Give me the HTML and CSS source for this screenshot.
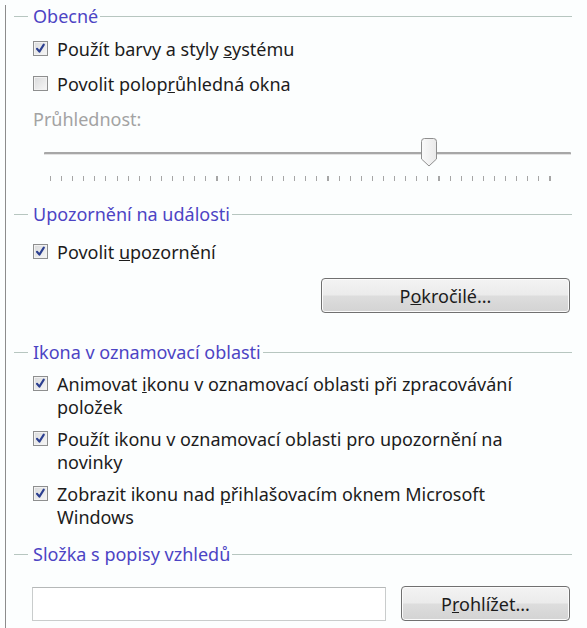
FILE: index.html
```html
<!DOCTYPE html>
<html lang="cs">
<head>
<meta charset="utf-8">
<link rel="stylesheet" href="styles.css">
</head>
<body>
<div class="panel">
  <div class="legend first"><span>Obecné</span></div>
  <div class="check r1"><span class="box on"><svg viewBox="0 0 13 13" width="13" height="13"><path d="M3 6.8 L5.4 9.6 L9.8 2.6" fill="none" stroke="#2b3f90" stroke-width="2.1" stroke-linecap="round" stroke-linejoin="round"/></svg></span><span class="label">Použít barvy a styly <u>s</u>ystému</span></div>
  <div class="check r2"><span class="box"></span><span class="label">Povolit polop<u>r</u>ůhledná okna</span></div>
  <div class="dim">Průhlednost:</div>
  <div class="slider">
    <div class="track"></div>
    <svg class="thumb" width="18" height="29" viewBox="0 0 18 29"><defs><linearGradient id="tg" x1="0" x2="1"><stop offset="0" stop-color="#fafafa"/><stop offset="1" stop-color="#e9e9e9"/></linearGradient></defs><path d="M1.5 3.5 Q1.5 0.5 4.5 0.5 H13.5 Q16.5 0.5 16.5 3.5 V21 L9 28 L1.5 21 Z" fill="url(#tg)" stroke="#8f8f8f"/></svg>
  </div>
  <div class="ticks"></div>

  <div class="legend l2"><span>Upozornění na události</span></div>
  <div class="check r3"><span class="box on"><svg viewBox="0 0 13 13" width="13" height="13"><path d="M3 6.8 L5.4 9.6 L9.8 2.6" fill="none" stroke="#2b3f90" stroke-width="2.1" stroke-linecap="round" stroke-linejoin="round"/></svg></span><span class="label">Povolit <u>u</u>pozornění</span></div>
  <div class="btn-row"><button class="btn wide">P<u>o</u>kročilé...</button></div>

  <div class="legend l3"><span>Ikona v oznamovací oblasti</span></div>
  <div class="check multi r4"><span class="box on"><svg viewBox="0 0 13 13" width="13" height="13"><path d="M3 6.8 L5.4 9.6 L9.8 2.6" fill="none" stroke="#2b3f90" stroke-width="2.1" stroke-linecap="round" stroke-linejoin="round"/></svg></span><span class="label">Animovat <u>i</u>konu v oznamovací oblasti při zpracovávání položek</span></div>
  <div class="check multi r5"><span class="box on"><svg viewBox="0 0 13 13" width="13" height="13"><path d="M3 6.8 L5.4 9.6 L9.8 2.6" fill="none" stroke="#2b3f90" stroke-width="2.1" stroke-linecap="round" stroke-linejoin="round"/></svg></span><span class="label">Použít ikonu v oznamovací oblasti pro upozornění na novinky</span></div>
  <div class="check multi r5"><span class="box on"><svg viewBox="0 0 13 13" width="13" height="13"><path d="M3 6.8 L5.4 9.6 L9.8 2.6" fill="none" stroke="#2b3f90" stroke-width="2.1" stroke-linecap="round" stroke-linejoin="round"/></svg></span><span class="label">Zobrazit ikonu nad <u>p</u>řihlašovacím oknem Microsoft Windows</span></div>

  <div class="legend l4"><span>Složka s popisy vzhledů</span></div>
  <div class="path-row">
    <div class="input"></div>
    <button class="btn">P<u>r</u>ohlížet...</button>
  </div>
</div>
</body>
</html>
```

FILE: styles.css
```css
html, body {
  margin: 0;
  padding: 0;
  background: #fcfefe;
}
body {
  width: 587px;
  height: 628px;
  overflow: hidden;
  font-family: "Noto Sans", "Open Sans", sans-serif;
  font-size: 18px;
  color: #1c1c1c;
}
.panel {
  margin-left: 5px;
  height: 628px;
  border-left: 1px solid #8c8c8c;
  padding-right: 15px;
  box-sizing: border-box;
}
.legend {
  display: flex;
  align-items: center;
  height: 22px;
  line-height: 22px;
  color: #4c44c4;
}
.legend.first { margin-top: 5px; }
.legend.l2 { margin-top: 22px; }
.legend.l3 { margin-top: 28px; }
.legend.l4 { margin-top: 15px; }
.legend::before {
  content: "";
  width: 14px;
  height: 1px;
  margin-left: 8px;
  margin-right: 5px;
  background: #b7c6c0;
}
.legend::after {
  content: "";
  flex: 1;
  height: 1px;
  margin-left: 2px;
  background: #b7c6c0;
}
.check {
  display: flex;
  align-items: flex-start;
  padding-left: 27px;
  padding-right: 27px;
  line-height: 22px;
}
.check.multi { line-height: 22.5px; }
.r1 { margin-top: 11px; }
.r2 { margin-top: 13px; }
.r3 { margin-top: 16px; }
.r4 { margin-top: 10px; }
.r5 { margin-top: 10px; }
.box {
  flex: none;
  display: block;
  width: 13px;
  height: 13px;
  margin-top: 3px;
  margin-right: 9px;
  border: 1px solid #8e8f8f;
  background: linear-gradient(135deg, #d9dadb, #f7f7f7);
  box-shadow: inset 0 0 0 1px #f2f2f2;
}
.box svg { display: block; }
.dim {
  color: #a3a3a3;
  padding-left: 27px;
  margin-top: 13px;
  line-height: 22px;
}
.slider {
  position: relative;
  height: 34px;
  margin-top: 4px;
}
.track {
  position: absolute;
  left: 38px;
  right: 1px;
  top: 18px;
  height: 2px;
  background: #a7a7a7;
  border-bottom: 1px solid #e2e2e2;
  border-radius: 1px;
}
.thumb {
  position: absolute;
  left: 414px;
  top: 4px;
}
.ticks {
  margin-left: 44px;
  margin-right: 21px;
  margin-top: 8px;
  height: 5px;
  background: repeating-linear-gradient(90deg, #a6a6a6 0 1px, transparent 1px 11.1px);
}
.btn-row {
  display: flex;
  justify-content: flex-end;
  margin-top: 15px;
  padding-right: 2px;
}
.btn {
  font: inherit;
  color: #1c1c1c;
  height: 35px;
  width: 169px;
  border: 1px solid #707070;
  border-radius: 4px;
  background: linear-gradient(#f3f3f3 0%, #ebebeb 48%, #dddddd 52%, #d3d3d3 100%);
  box-shadow: inset 0 0 0 1px #fbfbfb;
  padding: 0;
}
.btn.wide { width: 249px; }
.path-row {
  display: flex;
  align-items: center;
  gap: 15px;
  margin-top: 21px;
  padding-left: 26px;
  padding-right: 2px;
}
.input {
  width: 352px;
  height: 32px;
  border: 1px solid #c9cccc;
  border-top-color: #b5b8b8;
  background: #ffffff;
}
```
